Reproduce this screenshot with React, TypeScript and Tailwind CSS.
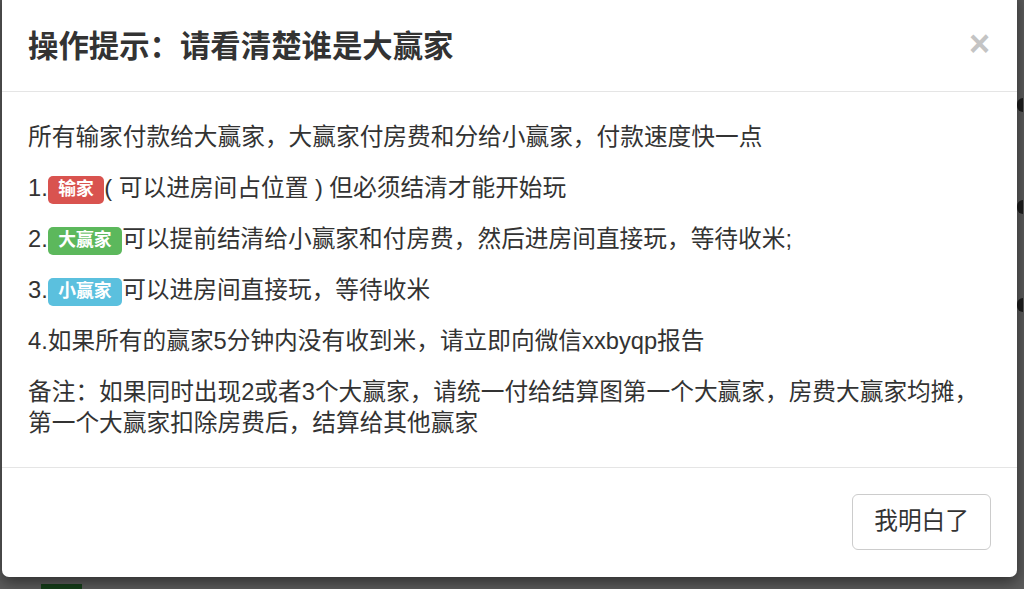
import React from 'react';

// Bootstrap-style label used inside the notice rows
function Tag({ tone, children }: { tone: 'red' | 'green' | 'blue'; children: React.ReactNode }) {
  const color =
    tone === 'red' ? 'bg-[#d9534f]' : tone === 'green' ? 'bg-[#5cb85c]' : 'bg-[#5bc0de]';
  return (
    <span
      className={`${color} inline-block rounded-[5px] px-[10.5px] pt-[4px] pb-[5px] align-[1px] text-[17.8px] leading-[19px] font-bold text-white`}
    >
      {children}
    </span>
  );
}

export default function App() {
  return (
    <div
      className="relative h-[589px] w-[1024px] overflow-hidden bg-[#5c5c5c]"
      style={{ fontFamily: '"Helvetica Neue", "Liberation Sans", "Noto Sans CJK SC", sans-serif' }}
    >
      {/* bits of the page under the backdrop */}
      <div className="absolute right-[1px] top-[98px] h-[14px] w-[6px] rounded-l-full bg-[#1e1e1e]" />
      <div className="absolute right-[1px] top-[200px] h-[14px] w-[6px] rounded-l-full bg-[#1e1e1e]" />
      <div className="absolute right-[1px] top-[298px] h-[14px] w-[6px] rounded-l-full bg-[#1e1e1e]" />
      <div className="absolute bottom-0 left-[41px] h-[5px] w-[41px] bg-[#163f1a]" />

      <div className="absolute left-[2px] top-[-10px] w-[1015px] rounded-[7px] bg-white shadow-[0_5px_15px_rgba(0,0,0,0.5)]">
        <div className="flex items-center justify-between border-b border-[#e5e5e5] px-[26px] pt-[37px] pb-[30px]">
          <h4
            className="text-[30.4px] leading-[34px] font-bold text-[#333]"
            style={{ fontFamily: '"Noto Sans CJK SC", sans-serif' }}
          >
            操作提示：请看清楚谁是大赢家
          </h4>
          <button className="mr-[1px] text-[36px] leading-[34px] font-bold text-[#c4c4c4]">×</button>
        </div>

        <div className="flex flex-col gap-[20px] px-[26px] pt-[30px] pb-[28px] text-[23.7px] leading-[31px] text-[#333]">
          <p>所有输家付款给大赢家，大赢家付房费和分给小赢家，付款速度快一点</p>
          <p>
            1.<Tag tone="red">输家</Tag>( 可以进房间占位置 ) 但必须结清才能开始玩
          </p>
          <p>
            2.<Tag tone="green">大赢家</Tag>可以提前结清给小赢家和付房费，然后进房间直接玩，等待收米;
          </p>
          <p>
            3.<Tag tone="blue">小赢家</Tag>可以进房间直接玩，等待收米
          </p>
          <p>4.如果所有的赢家5分钟内没有收到米，请立即向微信xxbyqp报告</p>
          <p>
            备注：如果同时出现2或者3个大赢家，请统一付给结算图第一个大赢家，房费大赢家均摊，
            <br />
            第一个大赢家扣除房费后，结算给其他赢家
          </p>
        </div>

        <div className="flex justify-end border-t border-[#e5e5e5] px-[26px] pt-[26px] pb-[27px]">
          <button className="h-[56px] rounded-[6px] border border-[#ccc] bg-white px-[21px] text-[23.7px] text-[#333]">
            我明白了
          </button>
        </div>
      </div>
    </div>
  );
}
